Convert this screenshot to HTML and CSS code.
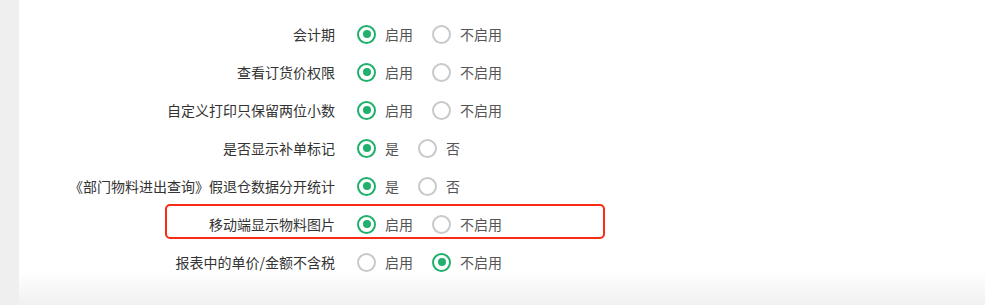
FILE: index.html
```html
<!DOCTYPE html>
<html lang="zh-CN">
<head>
<meta charset="utf-8">
<title>设置</title>
<link rel="stylesheet" href="styles.css">
</head>
<body>
<div class="page">
  <div class="side"></div>
  <div class="main">
    <div class="form">
      <div class="row">
        <div class="label">会计期</div>
        <div class="options">
          <span class="radio checked"><span class="circle"></span><span class="text">启用</span></span>
          <span class="radio"><span class="circle"></span><span class="text">不启用</span></span>
        </div>
      </div>
      <div class="row">
        <div class="label">查看订货价权限</div>
        <div class="options">
          <span class="radio checked"><span class="circle"></span><span class="text">启用</span></span>
          <span class="radio"><span class="circle"></span><span class="text">不启用</span></span>
        </div>
      </div>
      <div class="row">
        <div class="label">自定义打印只保留两位小数</div>
        <div class="options">
          <span class="radio checked"><span class="circle"></span><span class="text">启用</span></span>
          <span class="radio"><span class="circle"></span><span class="text">不启用</span></span>
        </div>
      </div>
      <div class="row">
        <div class="label">是否显示补单标记</div>
        <div class="options">
          <span class="radio checked"><span class="circle"></span><span class="text">是</span></span>
          <span class="radio"><span class="circle"></span><span class="text">否</span></span>
        </div>
      </div>
      <div class="row">
        <div class="label">《部门物料进出查询》假退仓数据分开统计</div>
        <div class="options">
          <span class="radio checked"><span class="circle"></span><span class="text">是</span></span>
          <span class="radio"><span class="circle"></span><span class="text">否</span></span>
        </div>
      </div>
      <div class="row highlight">
        <div class="label">移动端显示物料图片</div>
        <div class="options">
          <span class="radio checked"><span class="circle"></span><span class="text">启用</span></span>
          <span class="radio"><span class="circle"></span><span class="text">不启用</span></span>
        </div>
      </div>
      <div class="row">
        <div class="label">报表中的单价/金额不含税</div>
        <div class="options">
          <span class="radio"><span class="circle"></span><span class="text">启用</span></span>
          <span class="radio checked"><span class="circle"></span><span class="text">不启用</span></span>
        </div>
      </div>
    </div>
  </div>
</div>
</body>
</html>
```

FILE: styles.css
```css
html, body {
  margin: 0;
  padding: 0;
  height: 100%;
}

body {
  font-family: "Noto Sans CJK SC", "Noto Sans", "Liberation Sans", sans-serif;
  font-size: 14px;
  color: #333;
  background: #fff;
}

.page {
  display: flex;
  height: 305px;
  overflow: hidden;
}

.side {
  width: 19px;
  flex: none;
  background: #efefef;
}

.main {
  flex: 1;
  background: linear-gradient(to bottom, #ffffff 0, #ffffff 270px, #f1f1f1 305px);
}

.form {
  padding-top: 15px;
}

.row {
  display: flex;
  align-items: center;
  height: 38px;
}

.label {
  width: 316px;
  flex: none;
  text-align: right;
  color: #333;
  line-height: 20px;
}

.options {
  display: flex;
  align-items: center;
  gap: 19px;
  margin-left: 22px;
}

.radio {
  display: flex;
  align-items: center;
  gap: 9px;
  color: #555;
  line-height: 20px;
}

.circle {
  box-sizing: border-box;
  width: 19px;
  height: 19px;
  border: 2px solid #c9c9c9;
  border-radius: 50%;
  display: flex;
  align-items: center;
  justify-content: center;
  background: #fff;
}

.radio.checked .circle {
  border-color: #1fb06c;
}

.radio.checked .circle::after {
  content: "";
  width: 8px;
  height: 8px;
  border-radius: 50%;
  background: #1fb06c;
}

.row.highlight {
  position: relative;
}

.row.highlight::before {
  content: "";
  position: absolute;
  left: 146px;
  top: -1px;
  width: 440px;
  height: 35px;
  box-sizing: border-box;
  border: 2px solid #fb2a12;
  border-radius: 5px;
  pointer-events: none;
}
```
